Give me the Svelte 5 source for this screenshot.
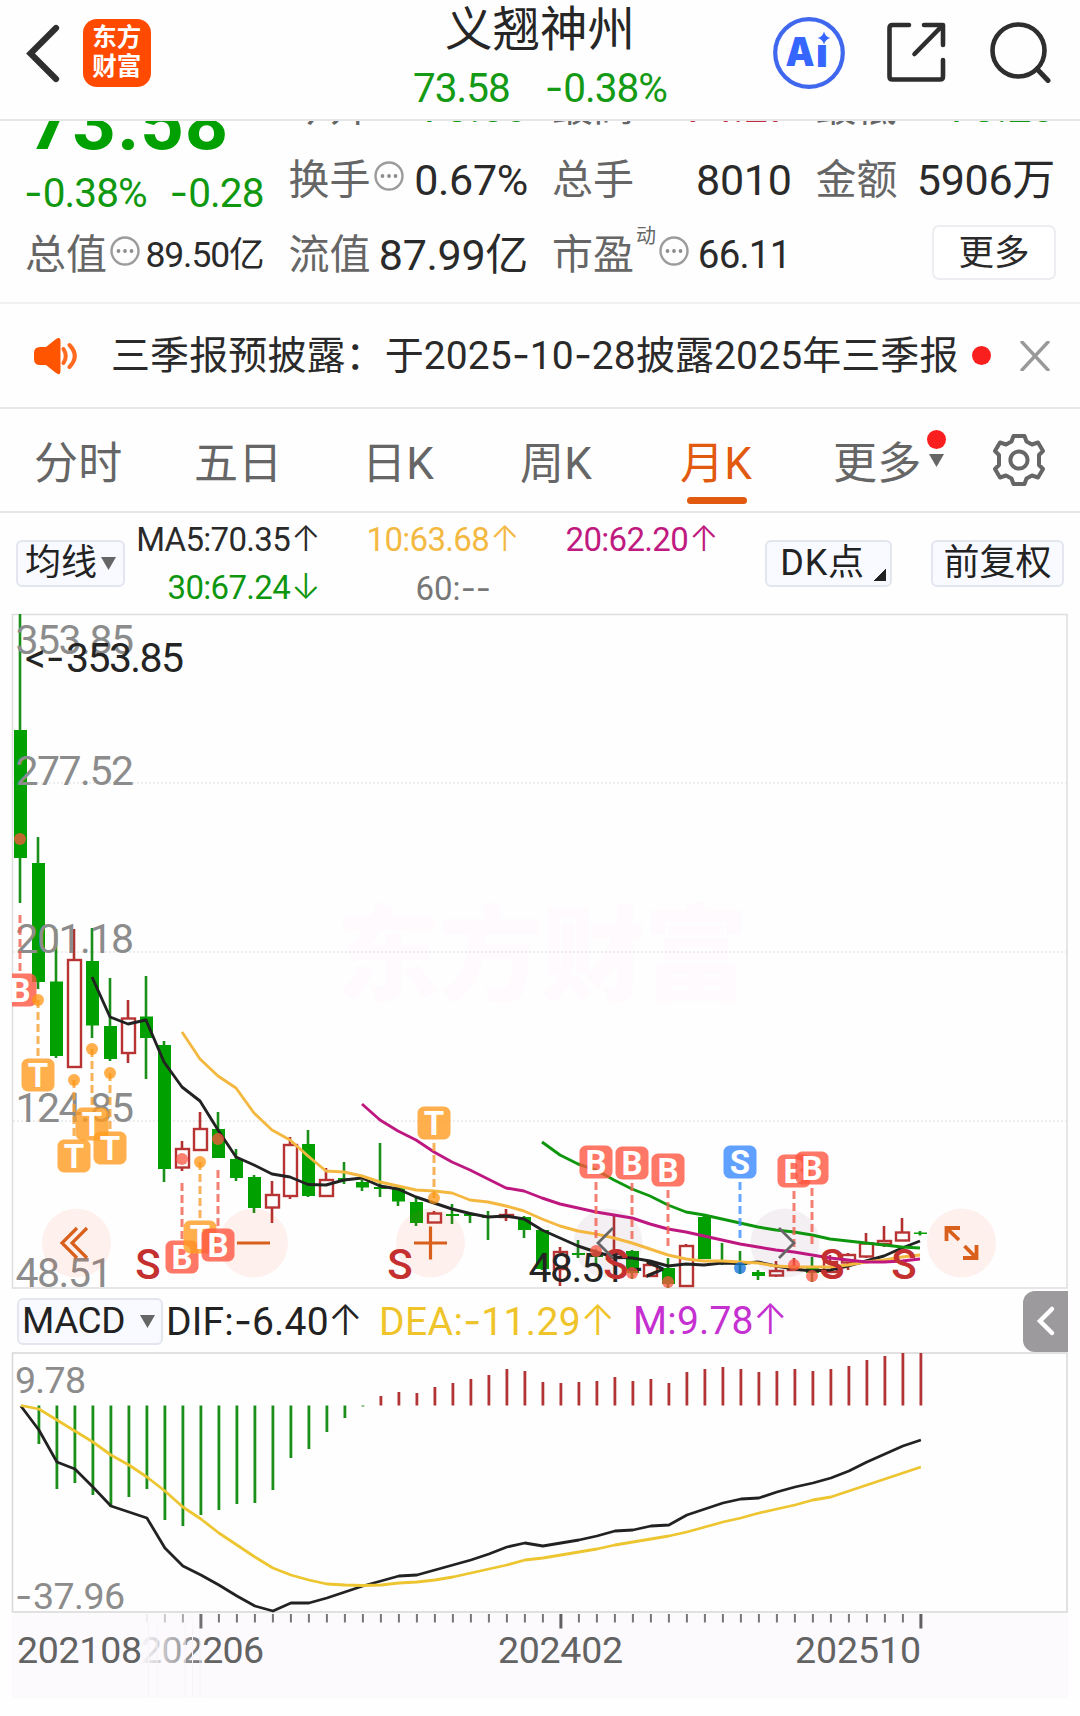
<script>
    const quoteRows = [
        [
            { label: "今开", value: "73.50", tone: "down" },
            { label: "最高", value: "74.27", tone: "up" },
            { label: "最低", value: "73.28", tone: "down" },
        ],
        [
            { label: "换手", value: "0.67%", info: true },
            { label: "总手", value: "8010" },
            { label: "金额", value: "5906万" },
        ],
    ];

    const STEP = 18;
    const xAt = (i) => 20 + i * STEP;

    // [direction, high, body top, body bottom, low], in chart pixels
    const candles = [
        ["d", 614, 730, 858, 903],
        ["d", 837, 863, 982, 989],
        ["d", 929, 981.5, 1056, 1058],
        ["u", 929, 960, 1067, 1068],
        ["d", 928, 961, 1025.5, 1038],
        ["d", 978, 1026, 1059, 1061],
        ["u", 1000, 1018.5, 1053, 1063],
        ["d", 976, 1016.5, 1038, 1079],
        ["d", 1041, 1045, 1169, 1182],
        ["u", 1141, 1149, 1167.5, 1171],
        ["u", 1112, 1129, 1150, 1151],
        ["d", 1112, 1129, 1158, 1158],
        ["d", 1149, 1159, 1178, 1181],
        ["d", 1175, 1177, 1208, 1213],
        ["u", 1181, 1195, 1207.5, 1223],
        ["u", 1137, 1145, 1196, 1199],
        ["d", 1130, 1144, 1196, 1197],
        ["u", 1168, 1180, 1196, 1196],
        ["d", 1162, 1178, 1180, 1184],
        ["d", 1180, 1182, 1187.5, 1191],
        ["d", 1143, 1187, 1189, 1197],
        ["d", 1186, 1188, 1201.5, 1206],
        ["d", 1198, 1202, 1223, 1226],
        ["u", 1211, 1213.5, 1222.5, 1223],
        ["d", 1204, 1214, 1216, 1224],
        ["d", 1212, 1214, 1216, 1223],
        ["d", 1211, 1216, 1218, 1240],
        ["u", 1209, 1215, 1217, 1221],
        ["d", 1216, 1217, 1230, 1238],
        ["d", 1229, 1230, 1269, 1270],
        ["u", 1247, 1252, 1269, 1286],
        ["d", 1240, 1253, 1255, 1258],
        ["d", 1249, 1253, 1257, 1266],
        ["u", 1216, 1254, 1258, 1266],
        ["d", 1250, 1251, 1273, 1279],
        ["u", 1263, 1265, 1276, 1276],
        ["d", 1258, 1268, 1284, 1288],
        ["u", 1244, 1246, 1286, 1287],
        ["d", 1216, 1217, 1259, 1259],
        ["d", 1243, 1261, 1263, 1265],
        ["d", 1251, 1262, 1265, 1274],
        ["d", 1270, 1272, 1276, 1280],
        ["u", 1261, 1271, 1275.5, 1277],
        ["u", 1258, 1268, 1270, 1271],
        ["d", 1257, 1266, 1273, 1282],
        ["u", 1255, 1262, 1272, 1273],
        ["u", 1253, 1255, 1262.5, 1270],
        ["u", 1233, 1243.5, 1256.5, 1258],
        ["u", 1226, 1241, 1244, 1247],
        ["u", 1218, 1232.5, 1240.5, 1241],
        ["d", 1231, 1232.5, 1234, 1235.5],
    ];

    const ma5 = [977, 1017, 1024, 1020, 1062, 1087, 1101, 1130, 1157, 1165, 1174, 1177, 1184.5, 1185, 1180, 1178, 1186, 1189, 1197, 1203, 1209, 1213.5, 1217, 1216, 1219, 1230, 1238, 1246, 1252, 1257, 1258, 1261, 1266, 1264, 1265, 1263, 1263.5, 1262, 1266, 1269, 1271, 1270, 1266, 1261, 1256, 1248, 1241];
    const ma10 = [1032, 1059, 1076, 1088, 1113, 1130, 1140, 1156, 1171, 1172, 1176, 1182, 1186, 1190, 1191, 1193, 1200, 1202, 1206, 1211, 1219, 1226, 1231, 1234, 1238, 1243, 1249, 1255, 1259, 1261, 1261, 1262, 1263, 1266, 1267, 1267, 1267, 1265, 1262, 1260, 1257, 1255];
    const ma20 = [1104, 1120, 1131, 1140, 1152, 1162, 1170, 1179, 1188, 1191, 1198, 1204, 1208, 1212, 1215, 1218, 1224, 1229, 1232, 1236, 1240, 1244, 1247, 1250, 1252, 1255, 1258, 1260, 1262, 1262, 1261, 1259];
    const ma30 = [1142, 1155, 1164, 1170, 1180, 1189, 1196, 1205, 1212, 1215, 1219, 1223, 1227, 1230, 1232, 1235, 1239, 1241, 1243, 1245, 1247, 1248];

    const ZERO = 1405.5;
    const hist = [1405.5, 1444, 1489, 1483, 1495, 1507, 1497, 1489, 1520, 1526, 1515, 1510, 1504, 1503, 1490, 1458, 1449, 1432, 1418, 1406.5, 1396, 1392, 1393, 1387, 1383, 1379, 1375, 1369, 1371, 1382, 1383, 1382, 1381, 1377, 1381, 1379, 1383, 1372, 1369, 1367, 1369, 1372, 1371, 1369, 1371, 1369, 1366, 1360, 1356, 1353, 1353];
    const dif = [1406, 1430, 1462, 1469, 1487, 1506, 1512, 1518, 1548, 1566, 1575, 1585, 1596, 1606, 1611, 1603, 1603, 1598, 1592, 1586, 1581, 1576, 1575, 1570, 1565, 1560, 1554, 1547, 1543, 1546, 1543, 1540, 1536, 1531, 1530, 1526, 1525, 1515, 1509, 1503, 1499, 1498, 1492, 1487, 1483, 1478, 1471, 1462, 1454, 1446, 1440];
    const dea = [1405.5, 1409, 1420, 1431, 1442, 1455, 1465, 1477, 1491, 1507, 1519, 1533, 1545, 1557, 1568, 1575, 1580, 1584, 1585, 1585.5, 1585, 1583, 1582, 1580, 1577, 1573, 1569, 1565, 1560, 1558, 1555, 1552, 1549, 1545, 1542, 1539, 1536, 1532, 1527, 1522, 1518, 1513, 1509, 1505, 1500, 1497, 1491, 1485, 1479, 1473, 1467];

    // the line covers the last values.length months
    function line(values) {
        const start = candles.length - values.length;
        return values.map((y, i) => `${xAt(start + i)},${y}`).join(" ");
    }

    // y = badge centre, dot = trade price, from/to = dashed stem
    const marks = [
        { i: 0, type: "B", y: 990, dot: 839, from: 915, to: 973 },
        { i: 1, type: "T", y: 1075, dot: 1000, from: 1000, to: 1058 },
        { i: 4, type: "T", y: 1124, dot: 1049, from: 1049, to: 1107 },
        { i: 3, type: "T", y: 1156, dot: 1080, from: 1080, to: 1139 },
        { i: 5, type: "T", y: 1148, dot: 1073, from: 1073, to: 1131 },
        { i: 9, type: "B", y: 1257, dot: 1159, from: 1183, to: 1240 },
        { i: 10, type: "T", y: 1237, dot: 1162, from: 1162, to: 1220 },
        { i: 11, type: "B", y: 1245, dot: 1139, from: 1170, to: 1228 },
        { i: 23, type: "T", y: 1123, dot: 1198, from: 1143, to: 1198 },
        { i: 32, type: "B", y: 1162, dot: 1251, from: 1182, to: 1238 },
        { i: 34, type: "B", y: 1163, dot: 1273, from: 1183, to: 1240 },
        { i: 36, type: "B", y: 1170, dot: 1282, from: 1190, to: 1246 },
        { i: 40, type: "S", y: 1162, dot: 1268, from: 1182, to: 1238 },
        { i: 43, type: "B", y: 1171, dot: 1265, from: 1191, to: 1247 },
        { i: 44, type: "B", y: 1168, dot: 1276, from: 1188, to: 1244 },
    ];

    const prices = [
        { text: "353.85", y: 654 },
        { text: "277.52", y: 785 },
        { text: "201.18", y: 953 },
        { text: "124.85", y: 1121.5 },
    ];

    const sells = [148, 400, 616, 832, 904];
    const pads = [76.5, 253.5, 430.5, 608, 785, 961.5];
</script>

{#snippet num(text)}{#each text.split(/(-)/) as part}{#if part === "-"}<span class="dash">-</span>{:else}{part}{/if}{/each}{/snippet}

{#snippet info()}
    <svg class="info" width="30" height="30" viewBox="0 0 30 30">
        <circle cx="15" cy="15" r="13.5" fill="none" stroke="#9c9c9c" stroke-width="2.4" />
        <circle cx="8.5" cy="15" r="1.9" fill="#8c8c8c" />
        <circle cx="15" cy="15" r="1.9" fill="#8c8c8c" />
        <circle cx="21.5" cy="15" r="1.9" fill="#8c8c8c" />
    </svg>
{/snippet}

{#snippet caret(cls)}
    <svg class={cls} width="15" height="13" viewBox="0 0 15 13">
        <path d="M0 0h15L7.5 13z" fill="#666" />
    </svg>
{/snippet}

<div class="page">
    <header class="topbar">
        <div class="brand">
            <svg width="36" height="60" viewBox="0 0 36 60">
                <path d="M31 5 5.500 30.500 31 56" fill="none" stroke="#2f2f2f" stroke-width="6.200" stroke-linecap="round" />
            </svg>
            <div class="logo"><span>东方</span><span>财富</span></div>
        </div>
        <div class="title">
            <h1>义翘神州</h1>
            <p><span>73.58</span><span>{@render num("-0.38%")}</span></p>
        </div>
        <div class="actions">
            <svg width="74" height="74" viewBox="0 0 74 74">
                <circle cx="37" cy="37" r="33.800" fill="none" stroke="#4068ee" stroke-width="4.200" />
                <text class="ai" x="13.500" y="50" textLength="29" lengthAdjust="spacingAndGlyphs">A</text>
                <text class="ai" x="44" y="51">ı</text>
                <path d="M52 15.500q1.500 5.500 6.500 6.500-5 1-6.500 6.500-1.500-5.500-6.500-6.500 5-1 6.500-6.500z" fill="#3566ff" />
            </svg>
            <svg width="62" height="62" viewBox="0 0 62 62" class="share">
                <g fill="none" stroke="#2e2e2e" stroke-width="4.600" stroke-linecap="round" stroke-linejoin="round">
                    <path d="M24 4H7.500Q4.500 4 4.500 7V55.500Q4.500 58.500 7.500 58.500H55Q58 58.500 58 55.500V39" />
                    <path d="M39 4H58V24M57 5 29.500 33" />
                </g>
            </svg>
            <svg width="62" height="62" viewBox="0 0 62 62">
                <circle cx="28.500" cy="29.500" r="26" fill="none" stroke="#2e2e2e" stroke-width="4.600" />
                <path d="M47 48 58 59.500" stroke="#2e2e2e" stroke-width="5" stroke-linecap="round" />
            </svg>
        </div>
    </header>

    <section class="quote">
        <div class="grid">
            <div class="last">73.58</div>
            {#each quoteRows as row, r}
                {#if r === 1}
                    <div class="cell change down"><span>{@render num("-0.38%")}</span><span>{@render num("-0.28")}</span></div>
                {/if}
                {#each row as item}
                    <div class="cell" class:scrolled={r === 0}>
                        <span class="label">{item.label}</span>
                        {#if item.info}{@render info()}{/if}
                        <span class="value {item.tone}">{item.value}</span>
                    </div>
                {/each}
            {/each}
            <div class="cell">
                <span class="label">总值</span>{@render info()}
                <span class="value small">89.50亿</span>
            </div>
            <div class="cell">
                <span class="label">流值</span>
                <span class="value">87.99亿</span>
            </div>
            <div class="cell">
                <span class="label">市盈</span><span class="sup">动</span>{@render info()}
                <span class="value pe">66.11</span>
            </div>
            <div class="cell end"><button class="more">更多</button></div>
        </div>
    </section>

    <section class="notice">
        <svg width="46" height="40" viewBox="0 0 46 40">
            <path d="M7 11H13L23 3Q27.500 0 27.500 5V35Q27.500 40 23 37L13 29H7Q1 29 1 23V17Q1 11 7 11z" fill="#ff5500" />
            <path d="M30.500 13Q35 20 30.500 27M36.500 9Q47 20 36.500 31" fill="none" stroke="#ff6a20" stroke-width="4" stroke-linecap="round" />
        </svg>
        <p>三季报预披露：于{@render num("2025-10-28")}披露2025年三季报</p>
        <i class="dot"></i>
        <svg class="close" width="30" height="30" viewBox="0 0 30 30">
            <path d="M2 1 28 29M28 1 2 29" stroke="#999" stroke-width="3.400" stroke-linecap="round" />
        </svg>
    </section>

    <nav class="tabs">
        <span class="tab">分时</span>
        <span class="tab">五日</span>
        <span class="tab">日K</span>
        <span class="tab">周K</span>
        <span class="tab active">月K</span>
        <span class="tab menu">更多<i class="dot"></i>{@render caret("tabcaret")}</span>
        <svg class="gear" width="54" height="54" viewBox="-27 -27 54 54">
            <g fill="none" stroke="#666" stroke-width="4">
                <path d="M-5.500-24H5.500L7.500-18.500 13-15.500 19-17.500 24-9 20-5V5L24 9 19 17.500 13 15.500 7.500 18.500 5.500 24H-5.500L-7.500 18.500-13 15.500-19 17.500-24 9-20 5V-5L-24-9-19-17.500-13-15.500-7.500-18.500z" stroke-linejoin="round" />
                <circle r="8.600" />
            </g>
        </svg>
    </nav>

    <section class="legend">
        <button class="chip avg">均线{@render caret("")}</button>
        <div class="mas">
            <span class="c5">MA5:70.35<b>↑</b></span>
            <span class="c10">10:63.68<b>↑</b></span>
            <span class="c20">20:62.20<b>↑</b></span>
            <span class="c30">30:67.24<b>↓</b></span>
            <span class="c60">60:{@render num("--")}</span>
        </div>
        <button class="chip dk">DK点<i class="corner"></i></button>
        <button class="chip adj">前复权</button>
    </section>

    <svg class="chart" width="1080" height="677" viewBox="0 613 1080 677">
        <defs>
            <clipPath id="plot"><rect x="12" y="613" width="1056" height="677" /></clipPath>
        </defs>
        <text class="watermark" x="336" y="993" textLength="412">东方财富</text>
        <rect x="12.500" y="614.500" width="1054.500" height="673.500" fill="none" stroke="#dedede" stroke-width="1.500" />
        {#each [783, 952, 1121] as y}
            <path d="M13 {y}H1066" stroke="#dcdcdc" stroke-dasharray="2 2" />
        {/each}

        <g clip-path="url(#plot)">
            {#each candles as [dir, high, top, bottom, low], i}
                {#if dir === "d"}
                    <path d="M{xAt(i)} {high}V{low}" stroke="#1a8f1a" stroke-width="2.600" />
                    <rect x={xAt(i) - 6} y={top} width="13" height={bottom - top} fill="#00a000" />
                {:else}
                    <path d="M{xAt(i)} {high}V{top}M{xAt(i)} {bottom}V{low}" stroke="#b23030" stroke-width="2.600" />
                    <rect x={xAt(i) - 6} y={top} width="13" height={bottom - top} fill="none" stroke="#b83434" stroke-width="2.400" />
                {/if}
            {/each}

            {#each prices as p}
                <text class="axis" x="15.500" y={p.y} textLength="118.500">{p.text}</text>
            {/each}
            <text class="axis" x="15.500" y="1287" textLength="97">48.51</text>

            {#each pads as x, i}
                <circle cx={x} cy="1243" r="34.500" fill={i === 3 || i === 4 ? "rgba(120,60,120,0.080)" : "rgba(255,80,20,0.080)"} />
            {/each}

            <g fill="none" stroke-width="2.900" stroke-linejoin="round">
                <polyline points={line(ma5)} stroke="#222" />
                <polyline points={line(ma10)} stroke="#f4b840" />
                <polyline points={line(ma20)} stroke="#be1880" />
                <polyline points={line(ma30)} stroke="#0f960f" />
            </g>

            <text class="peak" x="25" y="672">&lt;<tspan class="dash">-</tspan></text>
            <text class="peak" x="66" y="672" textLength="118">353.85</text>
            <text class="peak" x="528.500" y="1282" textLength="97">48.51</text>
            <text class="peak" x="625" y="1282"><tspan class="dash">-</tspan>&gt;</text>

            {#each sells as x}
                <text class="sell" {x} y="1279">S</text>
            {/each}

            {#each marks as m}
                <g class="mark {m.type}">
                    <path d="M{xAt(m.i)} {m.from}V{m.to}" stroke-width="3" stroke-dasharray="8 4" />
                    <circle cx={xAt(m.i)} cy={m.dot} r="6" />
                    <rect x={xAt(m.i) - 16.5} y={m.y - 16.5} width="33" height="33" rx="6.500" />
                    <text x={xAt(m.i)} y={m.y + 12}>{m.type}</text>
                </g>
            {/each}
        </g>

        <g fill="none" stroke="#d95f1c" stroke-width="3.200">
            <path d="M77 1228 62 1243 77 1258M87 1228 72 1243 87 1258" />
            <path d="M237 1243H270M414 1243H447M430.500 1226.500V1259.500" />
            <path d="M946.500 1241V1228H960M946.500 1228 959 1240M963 1258H976.500V1245M976.500 1258 964.500 1246" stroke-width="3.800" />
        </g>
        <path d="M613 1228 598 1243 613 1258M779 1228 794 1243 779 1258" fill="none" stroke="#666" stroke-width="2.800" />
    </svg>

    <section class="macd">
        <button class="chip ind">MACD{@render caret("")}</button>
        <span class="dif">DIF:{@render num("-6.40")}<b>↑</b></span>
        <span class="dea">DEA:{@render num("-11.29")}<b>↑</b></span>
        <span class="m">M:9.78<b>↑</b></span>
        <button class="fold" aria-label="fold">
            <svg width="20" height="32" viewBox="0 0 20 32">
                <path d="M16 4 4 16 16 28" fill="none" stroke="#fff" stroke-width="4.500" stroke-linecap="round" />
            </svg>
        </button>
    </section>

    <svg class="chart" width="1080" height="261" viewBox="0 1352 1080 261">
        <rect x="12.500" y="1353" width="1054.500" height="259" fill="none" stroke="#dadada" stroke-width="1.600" />
        <g transform="translate(0.900 0)">
            {#each hist as y, i}
                <path d="M{xAt(i)} {ZERO}V{y}" stroke={y > ZERO ? "#1a8f1a" : "#b23434"} stroke-width="2.800" />
            {/each}
        </g>
        <text class="axis sm" x="15" y="1392.500" textLength="71">9.78</text>
        <text class="axis sm" x="15" y="1609"><tspan class="dash">-</tspan></text>
        <text class="axis sm" x="33" y="1609" textLength="92">37.96</text>
        <g fill="none" stroke-width="2.800" stroke-linejoin="round" transform="translate(0.900 0)">
            <polyline points={line(dif)} stroke="#222" />
            <polyline points={line(dea)} stroke="#ecc530" />
        </g>
    </svg>

    <svg class="chart" width="1080" height="103" viewBox="0 1613 1080 103">
        <defs>
            <linearGradient id="fade" gradientUnits="userSpaceOnUse" x1="140" x2="208">
                <stop offset="0" stop-color="#fdfafe" />
                <stop offset="1" stop-color="#fdfafe" stop-opacity="0" />
            </linearGradient>
        </defs>
        <rect x="12" y="1613" width="1056" height="85" fill="#fdfafe" />
        <g transform="translate(0.900 0)">
            {#each candles as _, i}
                {#if i > 6}
                    {#if i % 20 === 10}
                        <path d="M{xAt(i)} 1614V1628.500" stroke="#606060" stroke-width="3" />
                    {:else}
                        <path d="M{xAt(i)} 1614V1622.500" stroke="#777" stroke-width="2" />
                    {/if}
                {/if}
            {/each}
        </g>
        <text class="axis date" x="141" y="1662.500" textLength="123">202206</text>
        <rect x="140" y="1613" width="70" height="85" fill="url(#fade)" />
        <path d="M148.500 1622V1697M157 1622V1697M185 1622V1697M192.500 1622V1697M200 1630V1697" stroke="#f7f4f9" />
        <text class="axis date" x="17" y="1662.500" textLength="125">202108</text>
        <text class="axis date" x="498" y="1662.500" textLength="125">202402</text>
        <text class="axis date" x="795" y="1662.500" textLength="126">202510</text>
    </svg>
</div>

<style>
    :global(body) {
        background: #fff;
    }
    .page {
        width: 1080px;
        height: 1716px;
        overflow: hidden;
        background: #fefefe;
        color: #2a2a2a;
        font-family: Roboto, Inter, "Noto Sans CJK SC", sans-serif;
        display: flex;
        flex-direction: column;
    }
    h1,
    p {
        margin: 0;
        font-weight: 400;
    }
    b {
        font-family: Inter, sans-serif;
        font-weight: 300;
        font-size: 1.080em;
        line-height: 0;
    }
    button {
        font-family: inherit;
        color: inherit;
        padding: 0;
        box-sizing: border-box;
    }
    svg {
        display: block;
        flex: none;
    }
    .dash {
        font-family: Inter, sans-serif;
        letter-spacing: 0;
    }
    .down {
        color: #109810;
    }
    .up {
        color: #c42a40;
    }
    .dot {
        width: 19px;
        height: 19px;
        border-radius: 50%;
        background: #fa1f1f;
    }

    /* top bar */
    .topbar {
        flex: none;
        height: 119px;
        border-bottom: 2px solid #e6e6e8;
        display: grid;
        grid-template-columns: 1fr 260px 1fr;
    }
    .brand {
        display: flex;
        align-items: flex-start;
        padding: 19px 0 0 25px;
        gap: 22px;
    }
    .brand svg {
        margin-top: 4px;
    }
    .logo {
        width: 67.500px;
        height: 68px;
        border-radius: 14px;
        background: #ff4a00;
        color: #fff;
        font-size: 24.500px;
        font-weight: 700;
        line-height: 29px;
        display: flex;
        flex-direction: column;
        align-items: center;
        padding-top: 4px;
        box-sizing: border-box;
    }
    .title {
        text-align: center;
    }
    .title h1 {
        font-size: 47.500px;
        line-height: 60px;
        color: #262626;
    }
    .title p {
        margin-top: 10px;
        font-size: 40.500px;
        letter-spacing: -1px;
        line-height: 36px;
        color: #159a15;
        display: flex;
        justify-content: center;
        gap: 35px;
    }
    .actions {
        display: flex;
        justify-content: flex-end;
        padding: 16px 28px 0 0;
    }
    .share {
        margin: 5px 43px 0 39px;
    }
    .actions svg:last-child {
        margin-top: 5px;
    }
    .ai {
        font-family: Inter, sans-serif;
        font-weight: 900;
        font-size: 40px;
        fill: #3566ff;
    }

    /* quote */
    .quote {
        flex: none;
        height: 181px;
        overflow: hidden;
        border-bottom: 2px solid #f1f1f3;
    }
    .grid {
        display: grid;
        grid-template-columns: repeat(4, 237.500px);
        grid-auto-rows: 75px;
        column-gap: 26px;
        padding: 0 26px;
        margin-top: -54px;
        white-space: nowrap;
    }
    .cell {
        display: flex;
        align-items: center;
        line-height: 50px;
    }
    .scrolled {
        padding-top: 5px;
    }
    .last {
        font-size: 76px;
        font-weight: 700;
        line-height: 76px;
        letter-spacing: 1px;
        color: #00a000;
        padding: 18px 0 0 2px;
    }
    .change {
        font-size: 40.500px;
        letter-spacing: -0.900px;
        line-height: 41px;
        justify-content: space-between;
        padding-top: 26px;
        height: 49px;
        margin-left: -2px;
    }
    .label {
        font-size: 41px;
        color: #666;
        margin-left: -1px;
    }
    .value {
        font-size: 43px;
        letter-spacing: -0.300px;
        margin: 0 -1px 0 auto;
    }
    .small {
        font-size: 35.500px;
        letter-spacing: -1.100px;
        margin-right: 0;
    }
    .pe {
        font-size: 38.500px;
        letter-spacing: -0.800px;
        margin-right: 0;
    }
    .sup {
        font-size: 20px;
        line-height: 24px;
        color: #666;
        align-self: flex-start;
        margin-top: 7px;
        padding-left: 2px;
    }
    .info {
        margin: -7px 0 0 3px;
    }
    .end {
        justify-content: flex-end;
    }
    .more {
        width: 124px;
        height: 55px;
        margin: -4px -2px 0 0;
        border: 2px solid #ececf1;
        border-radius: 7px;
        background: #fff;
        font-size: 35.500px;
        line-height: 48px;
    }

    /* notice */
    .notice {
        flex: none;
        height: 103px;
        border-bottom: 2px solid #e8e8ea;
        display: flex;
        align-items: center;
        padding: 0 30px 0 33px;
    }
    .notice p {
        margin-left: 32px;
        font-size: 39px;
        line-height: 50px;
        width: 847px;
        letter-spacing: 0.100px;
        white-space: nowrap;
    }
    .notice .dot {
        margin-left: 14px;
    }
    .notice .close {
        margin-left: auto;
    }

    /* tabs */
    .tabs {
        flex: none;
        height: 102px;
        border-bottom: 2px solid #e6e6e8;
        display: grid;
        grid-template-columns: 160px 168px 158px 160px 153px 159px auto;
        align-items: center;
        padding-left: 34px;
        font-size: 44px;
        letter-spacing: 0.300px;
        color: #666;
    }
    .tab {
        position: relative;
        justify-self: start;
        line-height: 60px;
        padding-top: 7px;
    }
    .active {
        color: #e25a10;
    }
    .active::after {
        content: "";
        position: absolute;
        left: 7px;
        top: 70px;
        width: 60px;
        height: 7px;
        border-radius: 4px;
        background: #e25a10;
    }
    .tab .dot {
        position: absolute;
        left: 94px;
        top: 3px;
    }
    .menu :global(.tabcaret) {
        position: absolute;
        left: 96px;
        top: 27px;
    }

    /* legend */
    .legend {
        flex: none;
        height: 100px;
        display: flex;
        align-items: center;
        padding: 0 16px;
    }
    .chip {
        height: 47px;
        border: 2px solid #e3e6ee;
        border-radius: 6px;
        background: #f8faff;
        color: #222;
        display: flex;
        align-items: center;
        justify-content: center;
        font-size: 36px;
        line-height: 42px;
        flex: none;
    }
    .avg {
        width: 109px;
        gap: 4px;
    }
    .mas {
        width: 640px;
        display: grid;
        grid-template-columns: 191px 199px 189px;
        grid-template-rows: 48px 48px;
        align-items: center;
        padding: 1px 0 0 14px;
        box-sizing: border-box;
        font-size: 33px;
        letter-spacing: -0.700px;
        white-space: nowrap;
    }
    .mas > span {
        justify-self: end;
    }
    .mas b {
        margin-left: 1px;
    }
    .mas .c5,
    .mas .c30 {
        margin-right: 10px;
    }
    .mas .c10 {
        margin-right: 10px;
    }
    .mas .c60 {
        margin-right: 38px;
        letter-spacing: 0;
        color: #777;
    }
    .c10 {
        color: #f4b942;
    }
    .c20 {
        color: #c01a80;
    }
    .c30 {
        color: #0f960f;
    }
    .dk {
        width: 127px;
        position: relative;
        padding-right: 12px;
        letter-spacing: 0.700px;
    }
    .corner {
        position: absolute;
        right: 4px;
        bottom: 4px;
        width: 12px;
        height: 12px;
        background: linear-gradient(135deg, transparent 50%, #222 50%);
    }
    .adj {
        width: 133px;
        margin-left: auto;
    }

    /* charts */
    .axis {
        font-size: 41px;
        fill: #8c8c8c;
    }
    .sm {
        font-size: 37.500px;
    }
    .date {
        font-size: 37.500px;
        fill: #636363;
    }
    .peak {
        font-size: 41px;
        fill: #242424;
    }
    .watermark {
        font-family: "Noto Sans CJK SC", sans-serif;
        font-size: 104px;
        font-weight: 900;
        fill: #fefafe;
    }
    .sell {
        font-size: 42px;
        font-weight: 500;
        text-anchor: middle;
        fill: #c43030;
    }
    .mark text {
        font-size: 33px;
        font-weight: 700;
        text-anchor: middle;
        fill: #fff;
    }
    .mark rect {
        fill-opacity: 0.800;
    }
    .mark circle {
        fill-opacity: 0.750;
    }
    .mark path {
        stroke-opacity: 0.800;
    }
    .B {
        fill: #ff5540;
    }
    .B path {
        stroke: #f06050;
    }
    .T {
        fill: #ff9c20;
    }
    .T circle {
        fill: #ff9410;
    }
    .T path {
        stroke: #f5a030;
    }
    .S {
        fill: #388aff;
    }
    .S circle {
        fill: #1070d8;
    }
    .S path {
        stroke: #4090ff;
    }

    /* macd */
    .macd {
        flex: none;
        height: 62px;
        display: flex;
        align-items: center;
        padding-left: 17px;
        font-size: 39px;
        letter-spacing: 0.200px;
        white-space: nowrap;
    }
    .macd b {
        margin-left: -1px;
    }
    .ind {
        width: 146px;
        font-size: 37px;
        letter-spacing: -0.500px;
        gap: 15px;
        padding-right: 3px;
    }
    .dif {
        width: 213px;
        margin-left: 3px;
        color: #222;
    }
    .dea {
        width: 254px;
        letter-spacing: 0.400px;
        color: #efc42a;
    }
    .m {
        color: #c530d0;
    }
    .fold {
        width: 45px;
        height: 61px;
        margin: 0 12px 0 auto;
        border: 0;
        border-radius: 12px 0 0 12px;
        background: #9c9a9c;
        display: flex;
        align-items: center;
        justify-content: center;
    }
</style>
